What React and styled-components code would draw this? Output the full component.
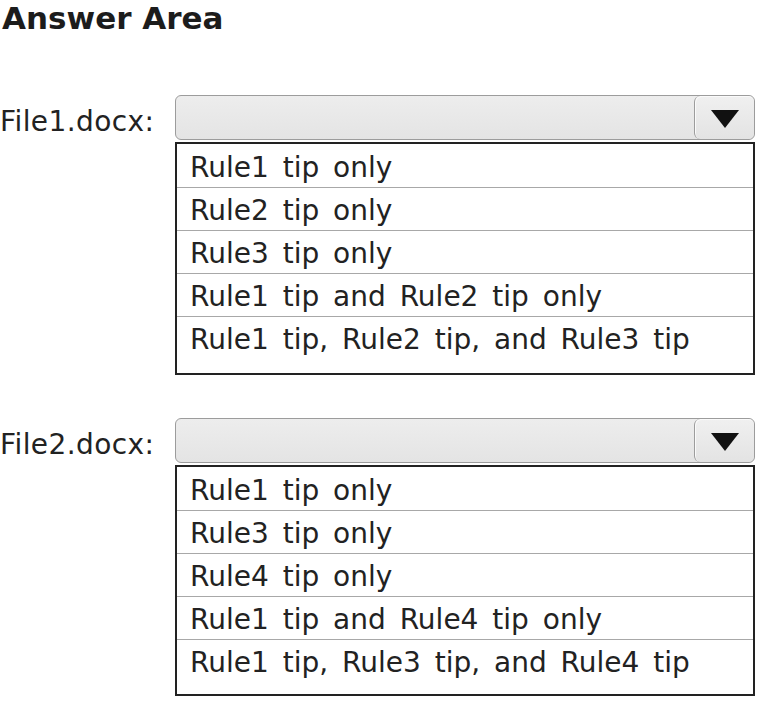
import React from "react";
import styled, { createGlobalStyle } from "styled-components";

const Global = createGlobalStyle`
  html, body { margin: 0; padding: 0; background: #ffffff; }
  body { font-family: "DejaVu Sans", Verdana, sans-serif; color: #1a1a1a; }
`;

const Page = styled.div`
  width: 758px;
  height: 702px;
  overflow: hidden;
  background: #fff;
`;

const Title = styled.h1`
  margin: 0;
  padding: 0 0 0 2px;
  height: 95px;
  box-sizing: border-box;
  font-size: 31px;
  line-height: 36px;
  font-weight: bold;
  color: #1c1c1c;
`;

const Block = styled.div`
  display: grid;
  grid-template-columns: 175px 580px;
  margin-bottom: ${(p) => p.$gap || 0}px;
`;

const Label = styled.div`
  font-size: 28px;
  line-height: 28px;
  padding-top: 13px;
  color: #222;
  letter-spacing: 0.4px;
  white-space: nowrap;
`;

const Column = styled.div`
  display: flex;
  flex-direction: column;
  gap: 2px;
`;

const Select = styled.div`
  height: 45px;
  box-sizing: border-box;
  border: 1px solid #9c9c9c;
  border-radius: 6px;
  background: linear-gradient(#ededed, #e4e4e4);
  display: flex;
  justify-content: flex-end;
`;

const Arrow = styled.div`
  width: 60px;
  height: 100%;
  box-sizing: border-box;
  border-left: 1px solid #9c9c9c;
  border-radius: 6px;
  background: linear-gradient(#f0f0f0, #e3e3e3);
  display: flex;
  align-items: center;
  justify-content: center;
  padding-top: 3px;
  box-shadow: inset 1px 1px 0 #fafafa;
`;

const List = styled.div`
  border: 2px solid #222;
  padding-bottom: ${(p) => p.$pad}px;
  background: #fff;
`;

const Option = styled.div`
  height: 43px;
  box-sizing: border-box;
  padding: 9px 0 0 13px;
  font-size: 28px;
  line-height: 28px;
  word-spacing: 5px;
  color: #222;
  white-space: nowrap;
  &:first-child {
    padding-top: 10px;
  }
  & + & {
    border-top: 1px solid #a8a8a8;
  }
`;

const blocks = [
  {
    label: "File1.docx:",
    options: [
      "Rule1 tip only",
      "Rule2 tip only",
      "Rule3 tip only",
      "Rule1 tip and Rule2 tip only",
      "Rule1 tip, Rule2 tip, and Rule3 tip",
    ],
    pad: 14,
    gap: 43,
  },
  {
    label: "File2.docx:",
    options: [
      "Rule1 tip only",
      "Rule3 tip only",
      "Rule4 tip only",
      "Rule1 tip and Rule4 tip only",
      "Rule1 tip, Rule3 tip, and Rule4 tip",
    ],
    pad: 12,
    gap: 0,
  },
];

export default function App() {
  return (
    <Page>
      <Global />
      <Title>Answer Area</Title>
      {blocks.map((b) => (
        <Block key={b.label} $gap={b.gap}>
          <Label>{b.label}</Label>
          <Column>
            <Select>
              <Arrow>
                <svg width="28" height="18" viewBox="0 0 28 18">
                  <polygon points="0,0 28,0 14,18" fill="#111" />
                </svg>
              </Arrow>
            </Select>
            <List $pad={b.pad}>
              {b.options.map((o) => (
                <Option key={o}>{o}</Option>
              ))}
            </List>
          </Column>
        </Block>
      ))}
    </Page>
  );
}
